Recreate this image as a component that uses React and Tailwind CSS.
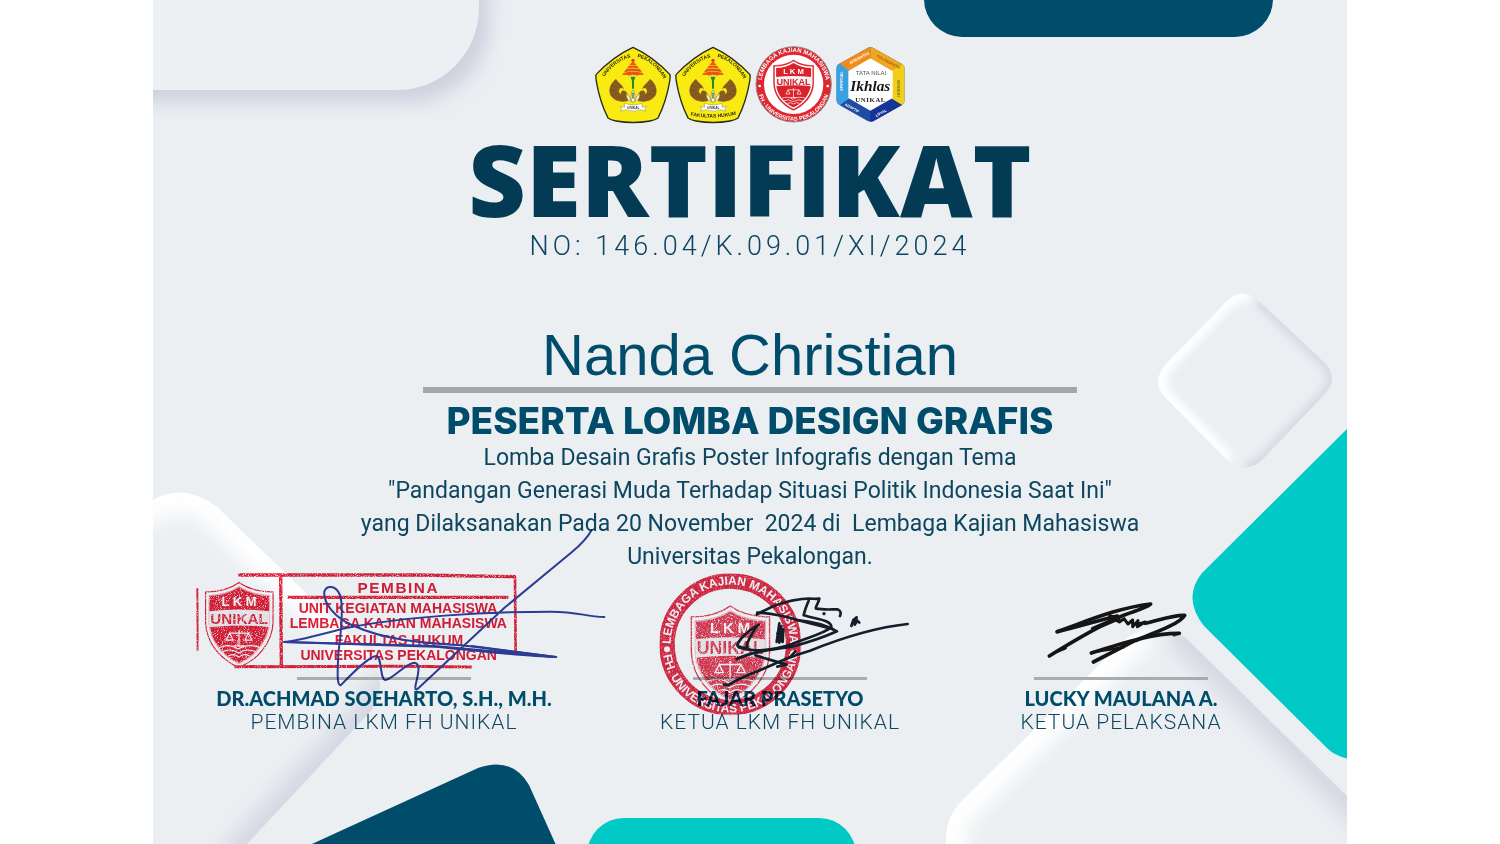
import React from "react";

const BEVELS = [
  {
    id: "diamond",
    shape:
      "M1228 300 Q1243 287 1259 301 L1326 364 Q1338 379 1326 393 L1261 461 Q1245 474 1228 461 L1163 395 Q1152 380 1166 364 Z",
    light: "M1228 461 L1163 395 Q1152 380 1166 364 L1228 300 Q1240 290 1250 295",
    dark: "M1259 301 L1326 364 Q1338 379 1326 393 L1261 461 Q1253 467 1245 468",
    lightWidth: 16,
    darkWidth: 10,
    blur: "soft",
  },
  {
    id: "corner",
    shape:
      "M946 860 L946 835 Q947 818 958 805 L1112 652 Q1148 612 1186 638 L1347 796 L1400 860 Z",
    light: "M946 860 L946 835 Q947 818 958 805 L1112 652 Q1130 634 1146 630",
    dark: "M1172 630 Q1180 632 1186 638 L1347 796 L1400 860",
    lightWidth: 42,
    darkWidth: 30,
    blur: "wide",
  },
  {
    id: "side",
    shape:
      "M100 520 L153 500 Q184 482 217 507 L367 652 Q391 682 371 711 L247 844 L220 880 L100 880 Z",
    light: "M120 510 L153 500 Q184 482 217 507 L367 652",
    dark: "M380 676 Q386 694 371 711 L247 844 L220 880",
    lightWidth: 42,
    darkWidth: 30,
    blur: "wide",
  },
];

function Backdrop() {
  return (
    <svg
      className="pointer-events-none absolute inset-0 h-full w-full"
      viewBox="153 0 1194 844"
      preserveAspectRatio="xMidYMin slice"
      aria-hidden="true"
    >
      <defs>
        <filter id="soft" x="-50%" y="-50%" width="200%" height="200%">
          <feGaussianBlur stdDeviation="4" />
        </filter>
        <filter id="wide" x="-50%" y="-50%" width="200%" height="200%">
          <feGaussianBlur stdDeviation="10" />
        </filter>
        <filter id="drop" x="-20%" y="-20%" width="150%" height="150%">
          <feDropShadow dx="11" dy="13" stdDeviation="9" floodColor="#c8cada" floodOpacity="0.8" />
        </filter>
        {BEVELS.map((b) => (
          <clipPath key={b.id} id={`clip-${b.id}`}>
            <path d={b.shape} />
          </clipPath>
        ))}
      </defs>
      <rect x="60" y="-120" width="419" height="210" rx="82" fill="#ecf0f3" filter="url(#drop)" />
      <rect x="924" y="-60" width="349" height="97" rx="38" fill="#004c6b" />
      {BEVELS.map((b) => (
        <g key={b.id} clipPath={`url(#clip-${b.id})`}>
          <path d={b.shape} fill="#ebeff2" />
          <path d={b.dark} fill="none" stroke="#d4d7e2" strokeWidth={b.darkWidth} filter={`url(#${b.blur})`} />
          <path d={b.light} fill="none" stroke="#ffffff" strokeWidth={b.lightWidth} filter={`url(#${b.blur})`} />
        </g>
      ))}
      <path d="M1360 416 L1202 573 Q1182 598 1204 626 L1328 749 Q1337 758 1360 761 Z" fill="#00c9c6" />
      <path d="M290 854 L478 768 Q512 756 529 785 L560 854 Z" fill="#004c6b" />
      <rect x="587" y="818" width="269" height="80" rx="37" fill="#00c9c6" />
    </svg>
  );
}

function Shield({ x, y, scale, color, worn }) {
  return (
    <g transform={`translate(${x} ${y}) scale(${scale})`}>
      <path
        d="M58 1 C75 13 96 17 116 17 V70 C114 105 90 132 58 146 C26 132 3 105 1 70 V17 C20 17 42 13 58 1 Z"
        fill={worn ? "none" : color}
        stroke={color}
        strokeWidth="2"
      />
      <path
        d="M58 7 C74 17 94 22 111 22 V70 C108 101 87 127 58 140 C29 127 8 101 6 70 V22 C24 22 43 17 58 7 Z"
        fill={color}
        stroke="#fff"
        strokeWidth="4"
        strokeOpacity={worn ? 0.6 : 1}
      />
      <path d="M7 50 Q58 44 110 50 V77 Q58 71 7 77 Z" fill="#f4eff1" />
      <text x="58" y="41" textAnchor="middle" fill="#fff" className="font-['Liberation_Sans'] text-[22px] font-bold">
        L K M
      </text>
      <text x="58" y="72" textAnchor="middle" fill={color} className="font-['Liberation_Sans'] text-[26px] font-bold">
        UNIKAL
      </text>
      <g stroke="#fff" strokeWidth="2" fill="none">
        <path d="M58 82 V108 M42 87 H74 M49 109 H67 M42 87 L36 99 H48 Z M74 87 L68 99 H80 Z" />
        <path d="M24 112 Q42 104 56 114 Q74 104 94 112 M30 119 Q44 112 57 121 Q72 112 87 119 M40 126 Q50 121 58 128 Q66 121 76 126" />
      </g>
    </g>
  );
}

function Wing() {
  return (
    <g fill="#8a5a22" stroke="#5f3d14" strokeWidth="1">
      <path d="M78 118 C64 128 56 146 60 160 C64 176 84 188 112 183 C117 174 114 160 106 154 C98 149 90 156 94 164 C88 162 84 154 88 147 C92 142 98 142 100 146 C98 136 84 128 78 118 Z" />
      <path d="M66 136 L78 142 M60 150 L76 154 M64 166 L82 162 M78 178 L90 170 M96 184 L100 172" fill="none" />
    </g>
  );
}

function UniversityLogo({ id, faculty, label }) {
  return (
    <svg className="h-[78px] w-[76px]" viewBox="15 18 228 234" role="img" aria-label={label}>
      <defs>
        <path id={`${id}-left`} d="M42 112 Q76 62 124 52" />
        <path id={`${id}-right`} d="M136 50 Q194 62 224 122" />
        <path id={`${id}-base`} d="M52 224 Q128 242 208 222" />
      </defs>
      <path
        d="M129 22 Q190 50 240 104 Q241 112 239 124 Q229 184 204 234 Q196 240 180 243 Q129 252 78 243 Q62 240 54 234 Q29 184 19 124 Q17 112 18 104 Q68 50 129 22 Z"
        fill="#f9ea12"
        stroke="#2c2a18"
        strokeWidth="4"
        strokeLinejoin="round"
      />
      <g fill="#2c2a12" className="font-['Liberation_Sans'] text-[15px] font-bold">
        <text>
          <textPath href={`#${id}-left`} startOffset="50%" textAnchor="middle">UNIVERSITAS</textPath>
        </text>
        <text>
          <textPath href={`#${id}-right`} startOffset="50%" textAnchor="middle">PEKALONGAN</textPath>
        </text>
        {faculty && (
          <text>
            <textPath href={`#${id}-base`} startOffset="50%" textAnchor="middle">FAKULTAS HUKUM</textPath>
          </text>
        )}
      </g>
      <circle cx="129" cy="61" r="5" fill="#e8351e" />
      <g fill="#e8541e">
        <path d="M129 64 L140 76 H118 Z" />
        <path d="M117 77 H141 L148 86 Q129 81 110 86 Z" />
        <path d="M108 88 Q129 83 150 88 L156 97 Q129 90 102 97 Z" />
        <path d="M100 99 Q129 92 158 99 L161 105 Q146 102 141 107 Q129 101 118 107 Q112 102 97 105 Z" />
      </g>
      <path d="M122 110 H136 L132 124 V146 H126 V124 Z" fill="#1f8b3a" />
      <Wing />
      <g transform="translate(258 0) scale(-1 1)">
        <Wing />
      </g>
      <path
        d="M129 150 Q121 158 124 184 Q129 190 134 184 Q137 158 129 150 Z M120 184 Q108 178 108 160 Q118 166 124 184 M138 184 Q150 178 150 160 Q140 166 134 184"
        fill="#fbf8dc"
        stroke="#5d5a2a"
        strokeWidth="1.5"
      />
      <path d="M129 158 V176" stroke="#222" strokeWidth="3" />
      <path d="M90 199 L104 202 V190 Q130 200 156 190 V202 L170 199 L164 208 L168 214 L152 209 Q130 218 107 209 L92 214 L96 207 Z" fill="#fff" stroke="#555" strokeWidth="1" />
      <text x="130" y="206" textAnchor="middle" fill="#444" className="font-['Liberation_Sans'] text-[10px] font-bold">
        UNIKAL
      </text>
    </svg>
  );
}

function LkmLogo() {
  return (
    <svg className="h-[78px] w-[77px]" viewBox="32 18 231 234" role="img" aria-label="Lembaga Kajian Mahasiswa UNIKAL">
      <defs>
        <path id="lkm-top" d="M51 133 A97 97 0 0 1 245 133" />
        <path id="lkm-base" d="M39 133 A109 109 0 0 0 257 133" />
      </defs>
      <circle cx="148" cy="133" r="113" fill="#e0262f" stroke="#8f8a8c" strokeWidth="3" />
      <circle cx="148" cy="133" r="89" fill="#fff" />
      <g fill="#fff" className="font-['Liberation_Sans'] text-[18px] font-bold">
        <text>
          <textPath href="#lkm-top" startOffset="50%" textAnchor="middle">LEMBAGA KAJIAN MAHASISWA</textPath>
        </text>
        <text className="text-[17px]">
          <textPath href="#lkm-base" startOffset="50%" textAnchor="middle">FH - UNIVERSITAS PEKALONGAN</textPath>
        </text>
      </g>
      <circle cx="46" cy="138" r="4" fill="#fff" />
      <circle cx="250" cy="138" r="4" fill="#fff" />
      <Shield x={87} y={59} scale={1.04} color="#d8232c" />
    </svg>
  );
}

function IkhlasLogo() {
  const tag = "font-['Liberation_Sans'] text-[11px] font-bold";
  return (
    <svg className="h-[78px] w-[70px]" viewBox="273 18 210 234" role="img" aria-label="Tata Nilai Ikhlas UNIKAL">
      <defs>
        <clipPath id="hex">
          <path d="M368 24 Q376 18 385 24 L470 71 Q479 76 479 86 V182 Q479 191 471 195 L386 243 Q377 248 368 243 L283 195 Q274 190 274 181 V86 Q274 76 283 71 Z" />
        </clipPath>
      </defs>
      <g clipPath="url(#hex)">
        <rect x="270" y="15" width="215" height="240" fill="#1e4da3" />
        <path d="M270 60 L376 15 V60 L308 95 Z" fill="#f08c1d" />
        <path d="M376 10 L485 60 V90 L444 94 L376 56 Z" fill="#f3a51f" />
        <path d="M485 66 L440 92 V176 L485 205 Z" fill="#f2ce1b" />
        <path d="M485 203 L440 176 L376 212 V255 H420 Z" fill="#16339a" />
        <path d="M270 60 L312 92 V176 L270 205 Z" fill="#3aa0e0" />
      </g>
      <path d="M376 55 L443 93 V174 L376 212 L310 174 V93 Z" fill="#fff" />
      <g fill="#fff" textAnchor="middle">
        <text transform="translate(345 57) rotate(-29)" className={tag}>INTEGRITAS</text>
        <text transform="translate(429 69) rotate(29)" fill="#8a6a10" className={tag}>KOLABORATIF</text>
        <text transform="translate(465 145) rotate(-90)" fill="#8a7a10" className={tag}>HUMANIS</text>
        <text transform="translate(294 123) rotate(-90)" className={tag}>SPIRITUAL</text>
        <text transform="translate(319 207) rotate(29)" className={tag}>ADAPTIF</text>
        <text transform="translate(410 222) rotate(-29)" className={tag}>LOYAL</text>
      </g>
      <g textAnchor="middle">
        <text x="378" y="104" fill="#555" className="font-['Liberation_Sans'] text-[18px]">TATA NILAI</text>
        <text x="376" y="153" fill="#151515" className="font-['Liberation_Serif'] text-[46px] font-bold italic">Ikhlas</text>
        <text x="377" y="187" fill="#222" className="font-['Liberation_Serif'] text-[20px] font-bold tracking-widest">UNIKAL</text>
      </g>
    </svg>
  );
}

function Grain({ id }) {
  return (
    <filter id={id} x="-5%" y="-5%" width="110%" height="110%">
      <feTurbulence type="fractalNoise" baseFrequency="0.35" numOctaves="2" seed="4" result="noise" />
      <feColorMatrix in="noise" type="matrix" values="0 0 0 0 0  0 0 0 0 0  0 0 0 0 0  0 0 0 -3 2.5" result="holes" />
      <feComposite in="SourceGraphic" in2="holes" operator="in" />
    </filter>
  );
}

function AdvisorMark() {
  return (
    <svg
      className="pointer-events-none absolute top-[-47px] left-[40px] h-[170px] w-[420px] mix-blend-multiply"
      viewBox="24 18 1260 510"
      role="img"
      aria-label="Cap dan tanda tangan Dr. Achmad Soeharto"
    >
      <defs>
        <Grain id="grain-a" />
      </defs>
      <g filter="url(#grain-a)">
        <g stroke="#e21d36" fill="none">
          <path d="M160 165 L700 165 L992 170" strokeWidth="10" />
          <path d="M990 168 L992 405" strokeWidth="8" />
          <path d="M148 440 L640 439 L860 441" strokeWidth="9" />
          <path d="M287 168 L289 440" strokeWidth="10" />
          <path d="M37 205 L38 392" strokeWidth="6" />
          <path d="M308 232 H970" strokeWidth="10" />
        </g>
        <Shield x={60} y={186} scale={1.76} color="#e21d36" worn />
      </g>
      <g fill="#e21d36" textAnchor="middle" className="font-['Liberation_Sans'] text-[42px] font-bold">
        <text x="640" y="218" className="text-[46px] tracking-widest">PEMBINA</text>
        <text x="639" y="280">UNIT KEGIATAN MAHASISWA</text>
        <text x="640" y="325">LEMBAGA KAJIAN MAHASISWA</text>
        <text x="642" y="376">FAKULTAS HUKUM</text>
        <text x="641" y="421">UNIVERSITAS PEKALONGAN</text>
      </g>
      <g fill="none" stroke="#2f3f9c" strokeWidth="6" strokeLinecap="round" strokeLinejoin="round">
        <path d="M1220 30 C1208 52 1185 76 1160 97 L960 262 L700 505 Q688 516 692 494 C700 460 708 430 688 428 C660 430 622 480 600 480 C584 476 592 412 574 408 C550 410 500 462 468 495 C454 500 458 450 460 400 C468 340 476 260 465 225 C452 195 425 195 418 215 C414 250 450 292 500 315 C600 360 700 368 830 376 L1114 411 C1000 408 850 388 750 380 L297 366 C330 365 400 345 480 325 C650 290 900 275 1100 275 C1180 275 1200 290 1258 291" />
        <path d="M300 366 L750 378 L1112 411 L860 378" />
      </g>
    </svg>
  );
}

function ChairMark() {
  return (
    <svg
      className="pointer-events-none absolute top-[-3px] left-[43px] h-[150px] w-[253px] mix-blend-multiply"
      viewBox="54 30 759 450"
      role="img"
      aria-label="Cap dan tanda tangan Fajar Prasetyo"
    >
      <defs>
        <Grain id="grain-b" />
        <path id="stamp-top" d="M92 253 A179 179 0 0 1 450 253" />
        <path id="stamp-base" d="M67 253 A204 204 0 0 0 475 253" />
      </defs>
      <circle cx="271" cy="253" r="190" fill="none" stroke="#e02642" strokeWidth="46" opacity="0.5" />
      <g filter="url(#grain-b)">
        <circle cx="271" cy="253" r="190" fill="none" stroke="#e02642" strokeWidth="46" />
        <Shield x={152} y={136} scale={2.04} color="#e23a53" worn />
      </g>
      <g fill="#ffffff" className="font-['Liberation_Sans'] text-[36px] font-bold">
        <text>
          <textPath href="#stamp-top" startOffset="50%" textAnchor="middle">LEMBAGA KAJIAN MAHASISWA</textPath>
        </text>
        <text>
          <textPath href="#stamp-base" startOffset="50%" textAnchor="middle">FH. UNIVERSITAS PEKALONGAN</textPath>
        </text>
      </g>
      <circle cx="81" cy="268" r="9" fill="#ffffff" />
      <circle cx="459" cy="280" r="9" fill="#ffffff" />
      <g fill="none" stroke="#14202b" strokeWidth="8" strokeLinecap="round" strokeLinejoin="round">
        <path d="M252 374 L264 376 C290 356 340 340 396 315 C430 298 470 284 510 272 C590 240 690 204 803 192" />
        <path d="M290 297 C340 274 400 268 456 260 C510 246 560 228 591 214 C560 196 520 184 470 180" />
        <path d="M300 260 C330 278 400 272 456 252 C510 230 550 222 574 202 C576 180 530 178 491 166 C494 150 500 136 506 122" />
        <path d="M350 164 C390 140 440 122 486 117 C510 114 524 118 538 116 C534 134 524 142 528 146 C550 150 572 148 592 148 C602 152 604 158 600 168" />
        <path d="M352 158 C400 160 440 170 480 182 L580 208" />
        <path d="M356 194 C320 214 296 240 292 256 C296 266 308 266 322 262 M350 200 C336 222 322 242 320 258" />
        <path d="M346 286 C380 296 410 306 440 314 L412 320" />
        <path d="M418 190 L410 246 L424 198 L418 248 L430 208 L428 246 L412 220" />
        <path d="M452 290 L466 274" />
        <path d="M634 198 L640 180 L650 172 L644 194 L652 182 L658 188" />
      </g>
      <circle cx="552" cy="161" r="5" fill="#14202b" />
    </svg>
  );
}

function OrganizerMark() {
  return (
    <svg
      className="pointer-events-none absolute top-[27px] left-[100px] h-[67px] w-[144px]"
      viewBox="135 60 432 201"
      role="img"
      aria-label="Tanda tangan Lucky Maulana"
    >
      <g fill="none" stroke="#151515" strokeWidth="11" strokeLinecap="round" strokeLinejoin="round">
        <path d="M171 155 C260 124 350 84 452 72 C440 84 400 94 370 106 L278 146" />
        <path d="M173 155 C250 136 300 120 352 108" />
        <path d="M148 228 C200 196 250 166 300 140 L356 116 L330 108" />
        <path d="M172 214 L196 204" strokeWidth="9" />
        <path d="M330 110 L358 126 L372 116 L384 132 L398 120 L398 140 L414 122 L412 140 L436 126 L410 134" strokeWidth="9" />
        <path d="M436 130 C480 120 520 104 554 106 C540 130 480 152 400 184 L280 246" />
        <path d="M274 219 C320 204 370 188 420 176 C460 166 500 160 538 160 L522 164" />
        <path d="M280 216 L370 202 L346 210" strokeWidth="8" />
      </g>
    </svg>
  );
}

const SIGNERS = [
  { name: "DR.ACHMAD SOEHARTO, S.H., M.H.", role: "PEMBINA LKM FH UNIKAL", Mark: AdvisorMark },
  { name: "FAJAR PRASETYO", role: "KETUA LKM FH UNIKAL", Mark: ChairMark },
  { name: "LUCKY MAULANA A.", role: "KETUA PELAKSANA", Mark: OrganizerMark },
];

export default function App() {
  return (
    <main className="flex min-h-screen justify-center bg-white">
      <article className="relative min-h-screen w-full max-w-[1194px] overflow-hidden bg-[#ebeff2] text-[#004c6b]">
        <Backdrop />
        <div className="relative flex flex-col items-center pt-[46px]">
          <header className="flex flex-col items-center text-center">
            <div className="flex gap-1">
              <UniversityLogo id="univ" label="Universitas Pekalongan" />
              <UniversityLogo id="fh" label="Fakultas Hukum Universitas Pekalongan" faculty />
              <LkmLogo />
              <IkhlasLogo />
            </div>
            <h1 className="mt-1 font-['Open_Sans',sans-serif] text-[100px] leading-[100px] font-extrabold text-[#033b55]">
              SERTIFIKAT
            </h1>
            <p className="mt-1 font-['Roboto',sans-serif] text-[27px] leading-[28px] font-light tracking-[4px] text-[#0b4561]">
              NO: 146.04/K.09.01/XI/2024
            </p>
          </header>

          <section className="mt-[63px] flex flex-col items-center text-center">
            <p className="font-['Liberation_Sans',sans-serif] text-[58px] leading-[64px]">Nanda Christian</p>
            <hr className="h-[6px] w-[654px] border-0 bg-[#a4a6a7]" />
            <h2 className="mt-2 font-['Inter',sans-serif] text-[37px] leading-[40px] font-extrabold">
              PESERTA LOMBA DESIGN GRAFIS
            </h2>
            <p className="font-['Roboto',sans-serif] text-[23px] leading-[33px] text-[#0e4660]">
              Lomba Desain Grafis Poster Infografis dengan Tema
              <br />
              "Pandangan Generasi Muda Terhadap Situasi Politik Indonesia Saat Ini"
              <br />
              yang Dilaksanakan Pada 20 November {"\u00a0"}2024 di {"\u00a0"}Lembaga Kajian Mahasiswa
              <br />
              Universitas Pekalongan.
            </p>
          </section>

          <section className="grid w-full grid-cols-[462fr_330fr_352fr] pr-[50px]">
            {SIGNERS.map(({ name, role, Mark }) => (
              <div key={name} className="relative flex flex-col items-center pt-[104px] text-center">
                <hr className="h-[3px] w-[174px] border-0 bg-[#a9acae]" />
                <p className="mt-1.5 font-['Lato',sans-serif] text-[20px] leading-[24px] font-black whitespace-nowrap">{name}</p>
                <p className="font-['Roboto',sans-serif] text-[21px] leading-[24px] font-light tracking-[1px] whitespace-nowrap text-[#0e4660]">
                  {role}
                </p>
                <Mark />
              </div>
            ))}
          </section>
        </div>
      </article>
    </main>
  );
}
